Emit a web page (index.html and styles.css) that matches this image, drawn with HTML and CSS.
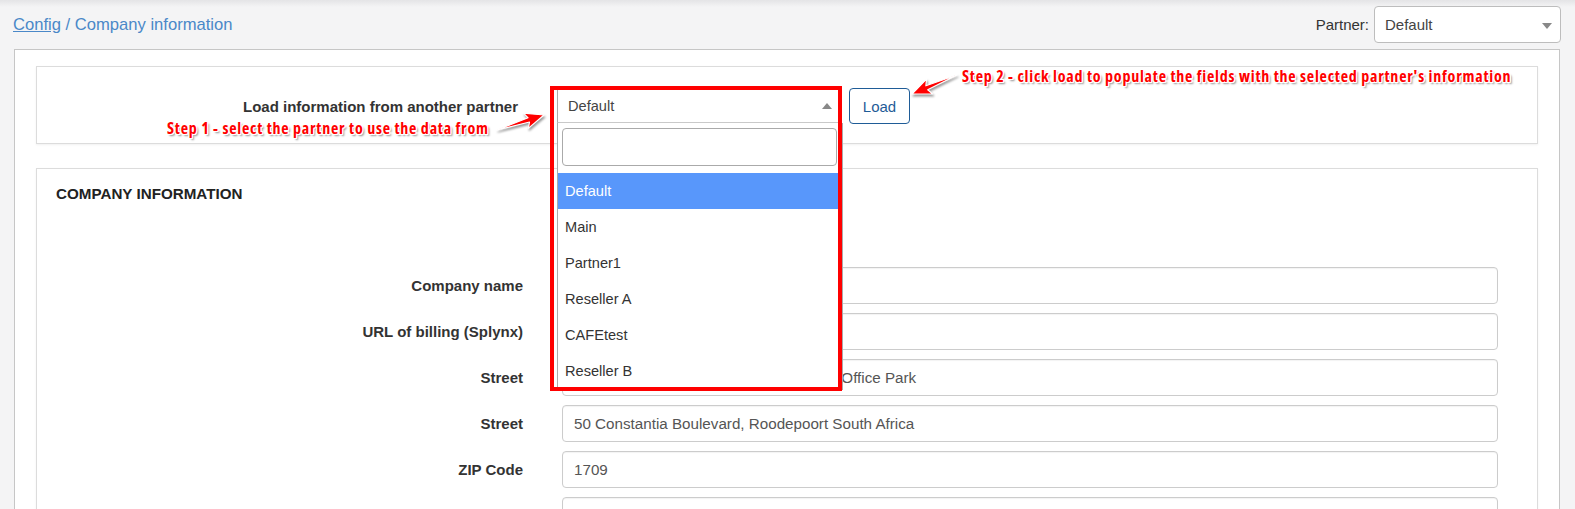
FILE: index.html
```html
<!DOCTYPE html>
<html lang="en">
<head>
<meta charset="utf-8">
<title>Company information</title>
<link rel="stylesheet" href="styles.css">
</head>
<body>
<div class="page">
  <header class="topbar">
    <nav class="crumbs"><a href="#">Config</a> / Company information</nav>
    <div class="partner">
      <span class="partner-label">Partner:</span>
      <div class="pselect">Default<span class="pcaret"></span></div>
    </div>
  </header>

  <main class="panel">
    <section class="card load-card">
      <div class="load-label">Load information from another partner</div>
      <div class="s2">
        <div class="s2-sel">Default<span class="s2-arrow"></span></div>
        <div class="s2-drop">
          <div class="s2-search"><input class="s2-input" type="text"></div>
          <ul class="s2-results">
            <li class="hl">Default</li>
            <li>Main</li>
            <li>Partner1</li>
            <li>Reseller A</li>
            <li>CAFEtest</li>
            <li>Reseller B</li>
          </ul>
        </div>
      </div>
      <button class="btn-load" type="button">Load</button>
    </section>

    <section class="card info-card">
      <h3 class="card-title">Company information</h3>
      <div class="form">
        <div class="row"><label class="lbl">Company name</label><input class="field" type="text" value=""></div>
        <div class="row"><label class="lbl">URL of billing (Splynx)</label><input class="field" type="text" value=""></div>
        <div class="row"><label class="lbl">Street</label><input class="field" type="text" value="Block 14, The Pines Estate, Constantia Office Park"></div>
        <div class="row"><label class="lbl">Street</label><input class="field" type="text" value="50 Constantia Boulevard, Roodepoort South Africa"></div>
        <div class="row"><label class="lbl">ZIP Code</label><input class="field" type="text" value="1709"></div>
        <div class="row"><label class="lbl"></label><input class="field" type="text" value=""></div>
      </div>
    </section>
  </main>

  <div class="mark-box"></div>
  <div class="note note1">Step 1 - select the partner to use the data from</div>
  <div class="note note2">Step 2 - click load to populate the fields with the selected partner's information</div>
  <svg class="arrow arrow1" width="60" height="30" viewBox="0 0 60 30">
    <polygon points="7,22 38.1,9.8 33.5,5.2 54,7 38.3,20.4 39.5,14"/>
  </svg>
  <svg class="arrow arrow2" width="60" height="35" viewBox="0 0 60 35">
    <polygon points="52,7 20.9,17.8 21.5,11.2 7,26 27.7,26 22.7,21.8"/>
  </svg>
</div>
</body>
</html>
```

FILE: styles.css
```css
* { box-sizing: border-box; }

html, body {
  margin: 0;
  padding: 0;
  height: 509px;
  overflow: hidden;
}

body {
  background: #f4f4f5;
  font-family: "Liberation Sans", Arial, sans-serif;
  font-size: 14px;
  color: #333;
}

.page {
  position: relative;
  min-height: 509px;
  background: linear-gradient(#e4e4e6 0, #f4f4f5 7px);
}

/* top bar */
.topbar {
  height: 49px;
  display: flex;
  align-items: center;
  justify-content: space-between;
  padding: 0 14px 0 13px;
}

.crumbs {
  font-size: 16.6px;
  color: #4a88c8;
  padding-top: 1px;
}

.crumbs a {
  color: #4a88c8;
  text-decoration: underline;
}

.partner {
  display: flex;
  align-items: center;
  gap: 5px;
}

.partner-label {
  font-size: 15px;
  color: #333;
}

.pselect {
  position: relative;
  width: 187px;
  height: 37px;
  border: 1px solid #bdbdbd;
  border-radius: 4px;
  background: #fff;
  padding: 0 10px;
  display: flex;
  align-items: center;
  font-size: 15px;
  color: #444;
}

.pcaret {
  position: absolute;
  right: 8px;
  top: 16px;
  width: 0;
  height: 0;
  border-left: 5px solid transparent;
  border-right: 5px solid transparent;
  border-top: 6px solid #888;
}

/* main panel */
.panel {
  margin: 0 15px 0 14px;
  background: #fff;
  border: 1px solid #c6c6c6;
  border-bottom: 0;
  padding: 16px 21px 0 21px;
  min-height: 470px;
}

.card {
  border: 1px solid #dcdcdc;
  background: #fff;
  box-shadow: 0 1px 2px rgba(0, 0, 0, 0.06);
}

.load-card {
  display: flex;
  align-items: center;
  padding: 21px 0 19px 0;
  margin-bottom: 24px;
}

.load-label {
  width: 481px;
  text-align: right;
  font-weight: bold;
  font-size: 15px;
  color: #333;
  margin-right: 39px;
}

/* select2 */
.s2 {
  position: relative;
  width: 285px;
  height: 34px;
  margin-right: 7px;
}

.s2-sel {
  position: relative;
  height: 34px;
  border: 1px solid #aaa;
  border-bottom-color: #c9c9c9;
  background: #fff;
  padding: 0 10px;
  display: flex;
  align-items: center;
  font-size: 14.6px;
  color: #444;
}

.s2-arrow {
  position: absolute;
  right: 9px;
  top: 13px;
  width: 0;
  height: 0;
  border-left: 5px solid transparent;
  border-right: 5px solid transparent;
  border-bottom: 6px solid #888;
}

.s2-drop {
  position: absolute;
  left: 0;
  top: 34px;
  width: 286px;
  background: #fff;
  border: 1px solid #aaa;
  border-top: 0;
  z-index: 5;
}

.s2-search {
  padding: 5px 5px 7px 4px;
}

.s2-input {
  display: block;
  width: 100%;
  height: 38px;
  border: 1px solid #aaa;
  border-radius: 4px;
  background: #fff;
  outline: none;
}

.s2-results {
  list-style: none;
  margin: 0;
  padding: 0;
}

.s2-results li {
  height: 36px;
  line-height: 36px;
  padding-left: 7px;
  font-size: 14.6px;
  color: #333;
}

.s2-results li.hl {
  background: #5897fb;
  color: #fff;
}

.btn-load {
  width: 61px;
  height: 36px;
  border: 1px solid #1f5c97;
  border-radius: 4px;
  background: #fff;
  color: #1f5c97;
  font-family: "Liberation Sans", Arial, sans-serif;
  font-size: 15px;
  padding: 0;
}

/* company info card */
.info-card {
  padding: 15px 39px 40px 0;
  min-height: 400px;
}

.card-title {
  margin: 0 0 63px 19px;
  font-size: 15.2px;
  line-height: 20px;
  font-weight: bold;
  text-transform: uppercase;
  color: #222;
}

.form {
  display: flex;
  flex-direction: column;
  gap: 9px;
}

.row {
  display: flex;
  align-items: center;
}

.lbl {
  width: 486px;
  flex: none;
  text-align: right;
  font-weight: bold;
  font-size: 15px;
  color: #333;
  margin-right: 39px;
}

.field {
  flex: 1;
  height: 37px;
  border: 1px solid #ccc;
  border-radius: 4px;
  box-shadow: inset 0 1px 1px rgba(0, 0, 0, 0.05);
  padding: 0 11px;
  font-family: "Liberation Sans", Arial, sans-serif;
  font-size: 15.2px;
  color: #555;
  background: #fff;
}

/* annotations */
.mark-box {
  position: absolute;
  left: 550px;
  top: 86px;
  width: 292px;
  height: 305px;
  border: 4px solid #ff0000;
  z-index: 10;
}

.note {
  position: absolute;
  z-index: 11;
  white-space: nowrap;
  font-family: "Open Sans", "DejaVu Sans", sans-serif;
  font-weight: bold;
  font-stretch: condensed;
  font-size: 16px;
  letter-spacing: 0.78px;
  line-height: 18px;
  color: #ff0000;
  text-shadow:
    -1px -1px 0 #fff, 1px -1px 0 #fff, -1px 1px 0 #fff, 1px 1px 0 #fff,
    0 -1px 0 #fff, 0 1px 0 #fff, -1px 0 0 #fff, 1px 0 0 #fff,
    2px 2px 2px rgba(0, 0, 0, 0.45);
}

.note1 { left: 167px; top: 119px; }
.note2 { left: 962px; top: 67px; }

.arrow {
  position: absolute;
  z-index: 11;
  overflow: visible;
  filter: drop-shadow(1px 2px 1px rgba(0, 0, 0, 0.4));
}

.arrow polygon {
  fill: #ff0000;
  stroke: #fff;
  stroke-width: 1.2;
  stroke-linejoin: round;
}

.arrow1 { left: 490px; top: 108px; }
.arrow2 { left: 905px; top: 68px; }
```
